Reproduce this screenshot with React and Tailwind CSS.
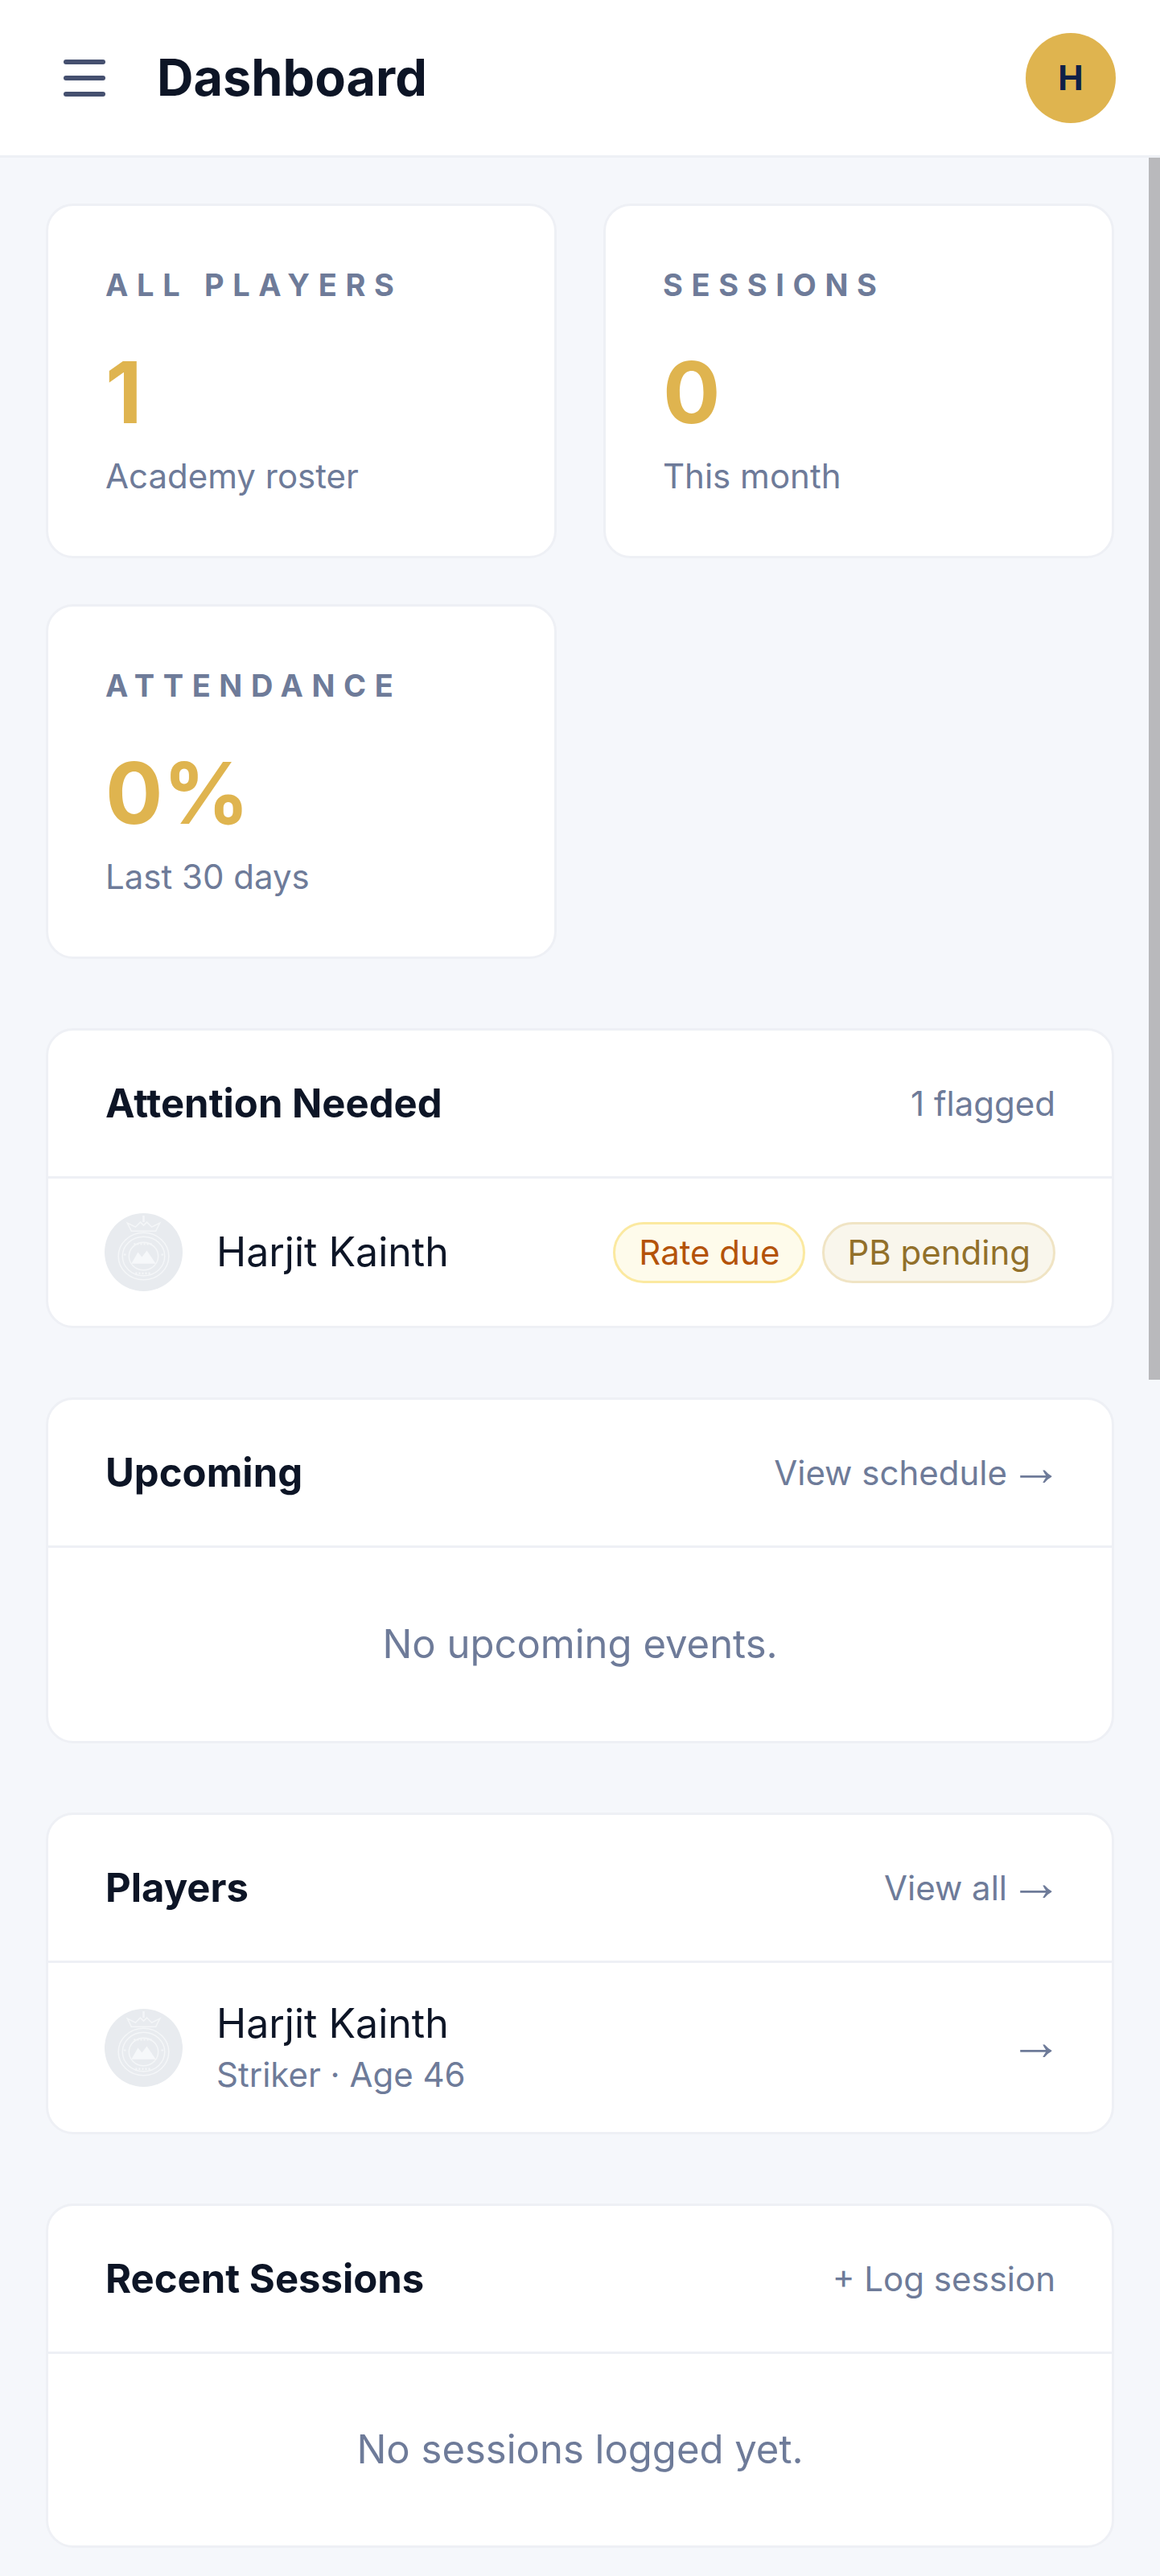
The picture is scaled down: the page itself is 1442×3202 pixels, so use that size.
function Crest() {
  return (
    <svg viewBox="0 0 96 96" className="w-[97px] h-[97px] shrink-0">
      <circle cx="48" cy="48" r="48" fill="#e8ebef" />
      <g fill="none" stroke="#f4f6f8" strokeWidth="1.5">
        <ellipse cx="48" cy="53" rx="31" ry="29" />
        <ellipse cx="48" cy="53" rx="26" ry="24" />
        <ellipse cx="48" cy="53" rx="18" ry="17" />
        <path d="M33 22L28 12L38 17L44 11L48 15L52 11L58 17L68 12L63 22Z" />
        <path d="M48 11V3" strokeWidth="2.4" />
        <path d="M25 50V54M71 50V54M36 38H60M38 74H58" strokeWidth="2.4" strokeDasharray="2 2" />
      </g>
      <path d="M33 62L41 48L46 54L52 46L63 62Z" fill="#f6f8fa" />
    </svg>
  )
}

function StatCard({ label, value, sub }) {
  return (
    <div className="h-[441px] bg-white border-[3px] border-[#eef0f5] rounded-[34px] pt-[76px] pl-[71px]">
      <div className="text-[38px] leading-[44px] font-bold tracking-[0.28em] text-[#6e7b99]">{label}</div>
      <div className="text-[106px] leading-[106px] font-bold text-[#dfb44f] mt-[59px]">{value}</div>
      <div className="text-[42px] leading-[52px] text-[#6e7b99] mt-[25px]">{sub}</div>
    </div>
  )
}

function Arrow({ className = '' }) {
  return <span className={"font-['Liberation_Sans',sans-serif] text-[66px] leading-[42px] -mr-[9px] mb-[16px] " + className}>→</span>
}

function Panel({ title, action, children }) {
  return (
    <section className="bg-white border-[3px] border-[#eef0f5] rounded-[34px] overflow-hidden">
      <div className="h-[184px] flex items-center justify-between pl-[71px] pr-[70px] border-b-[3px] border-[#eef0f5]">
        <h2 className="text-[49px] font-bold text-[#0d1526]">{title}</h2>
        <div className="flex items-center whitespace-nowrap text-[42px] leading-[52px] text-[#6e7b99]">{action}</div>
      </div>
      {children}
    </section>
  )
}

export default function App() {
  return (
    <div className="relative min-h-[3202px] bg-[#f5f7fb] font-['Inter',sans-serif]">
      <header className="h-[196px] bg-white border-b-[3px] border-[#eef0f5] flex items-center justify-between pl-[79px] pr-[55px]">
        <div className="flex items-center gap-[64px]">
          <svg viewBox="0 0 52 46" className="w-[52px] h-[46px]">
            <g stroke="#45506f" strokeWidth="6" strokeLinecap="round">
              <path d="M3 3H49" />
              <path d="M3 23H49" />
              <path d="M3 43H49" />
            </g>
          </svg>
          <h1 className="text-[63px] font-bold text-[#0d1526]">Dashboard</h1>
        </div>
        <div className="w-[112px] h-[112px] rounded-full bg-[#dfb44f] flex items-center justify-center text-[42px] font-bold text-[#0f2048]">H</div>
      </header>

      <main className="px-[57px] pt-[57px]">
        <div className="grid grid-cols-2 gap-x-[58px] gap-y-[57px]">
          <StatCard label="ALL PLAYERS" value="1" sub="Academy roster" />
          <StatCard label="SESSIONS" value="0" sub="This month" />
          <StatCard label="ATTENDANCE" value="0%" sub="Last 30 days" />
        </div>

        <div className="flex flex-col gap-[86px] mt-[86px]">
          <Panel title="Attention Needed" action="1 flagged">
            <div className="h-[183px] flex items-center pl-[70px] pr-[70px]">
              <Crest />
              <span className="ml-[42px] text-[50px] text-[#0d1526]">Harjit Kainth</span>
              <div className="ml-auto flex gap-[21px]">
                <span className="h-[76px] px-[29px] flex items-center rounded-full border-[3px] border-[#fbe9a0] bg-[#fefbeb] text-[42px] text-[#b45309]">Rate due</span>
                <span className="h-[76px] px-[28px] flex items-center rounded-full border-[3px] border-[#f0e4c4] bg-[#f9f6ec] text-[42px] text-[#92702a]">PB pending</span>
              </div>
            </div>
          </Panel>

          <Panel title="Upcoming" action={<>View schedule<Arrow className="ml-[3px]" /></>}>
            <div className="h-[240px] flex items-center justify-center text-[49px] text-[#6e7b99]">No upcoming events.</div>
          </Panel>

          <Panel title="Players" action={<>View all<Arrow className="ml-[3px]" /></>}>
            <div className="h-[210px] flex items-center pl-[70px] pr-[70px]">
              <Crest />
              <div className="ml-[42px]">
                <div className="text-[50px] leading-[68px] text-[#0d1526]">Harjit Kainth</div>
                <div className="text-[42px] leading-[60px] text-[#6e7b99]">Striker · Age 46</div>
              </div>
              <Arrow className="ml-auto text-[#6e7b99]" />
            </div>
          </Panel>

          <Panel title="Recent Sessions" action="+ Log session">
            <div className="h-[238px] flex items-center justify-center text-[49px] text-[#6e7b99]">No sessions logged yet.</div>
          </Panel>
        </div>
      </main>

      {/* overlay scrollbar */}
      <div className="absolute right-0 top-[196px] w-[14px] h-[1519px] bg-[#b9b9bc]" />
    </div>
  )
}
